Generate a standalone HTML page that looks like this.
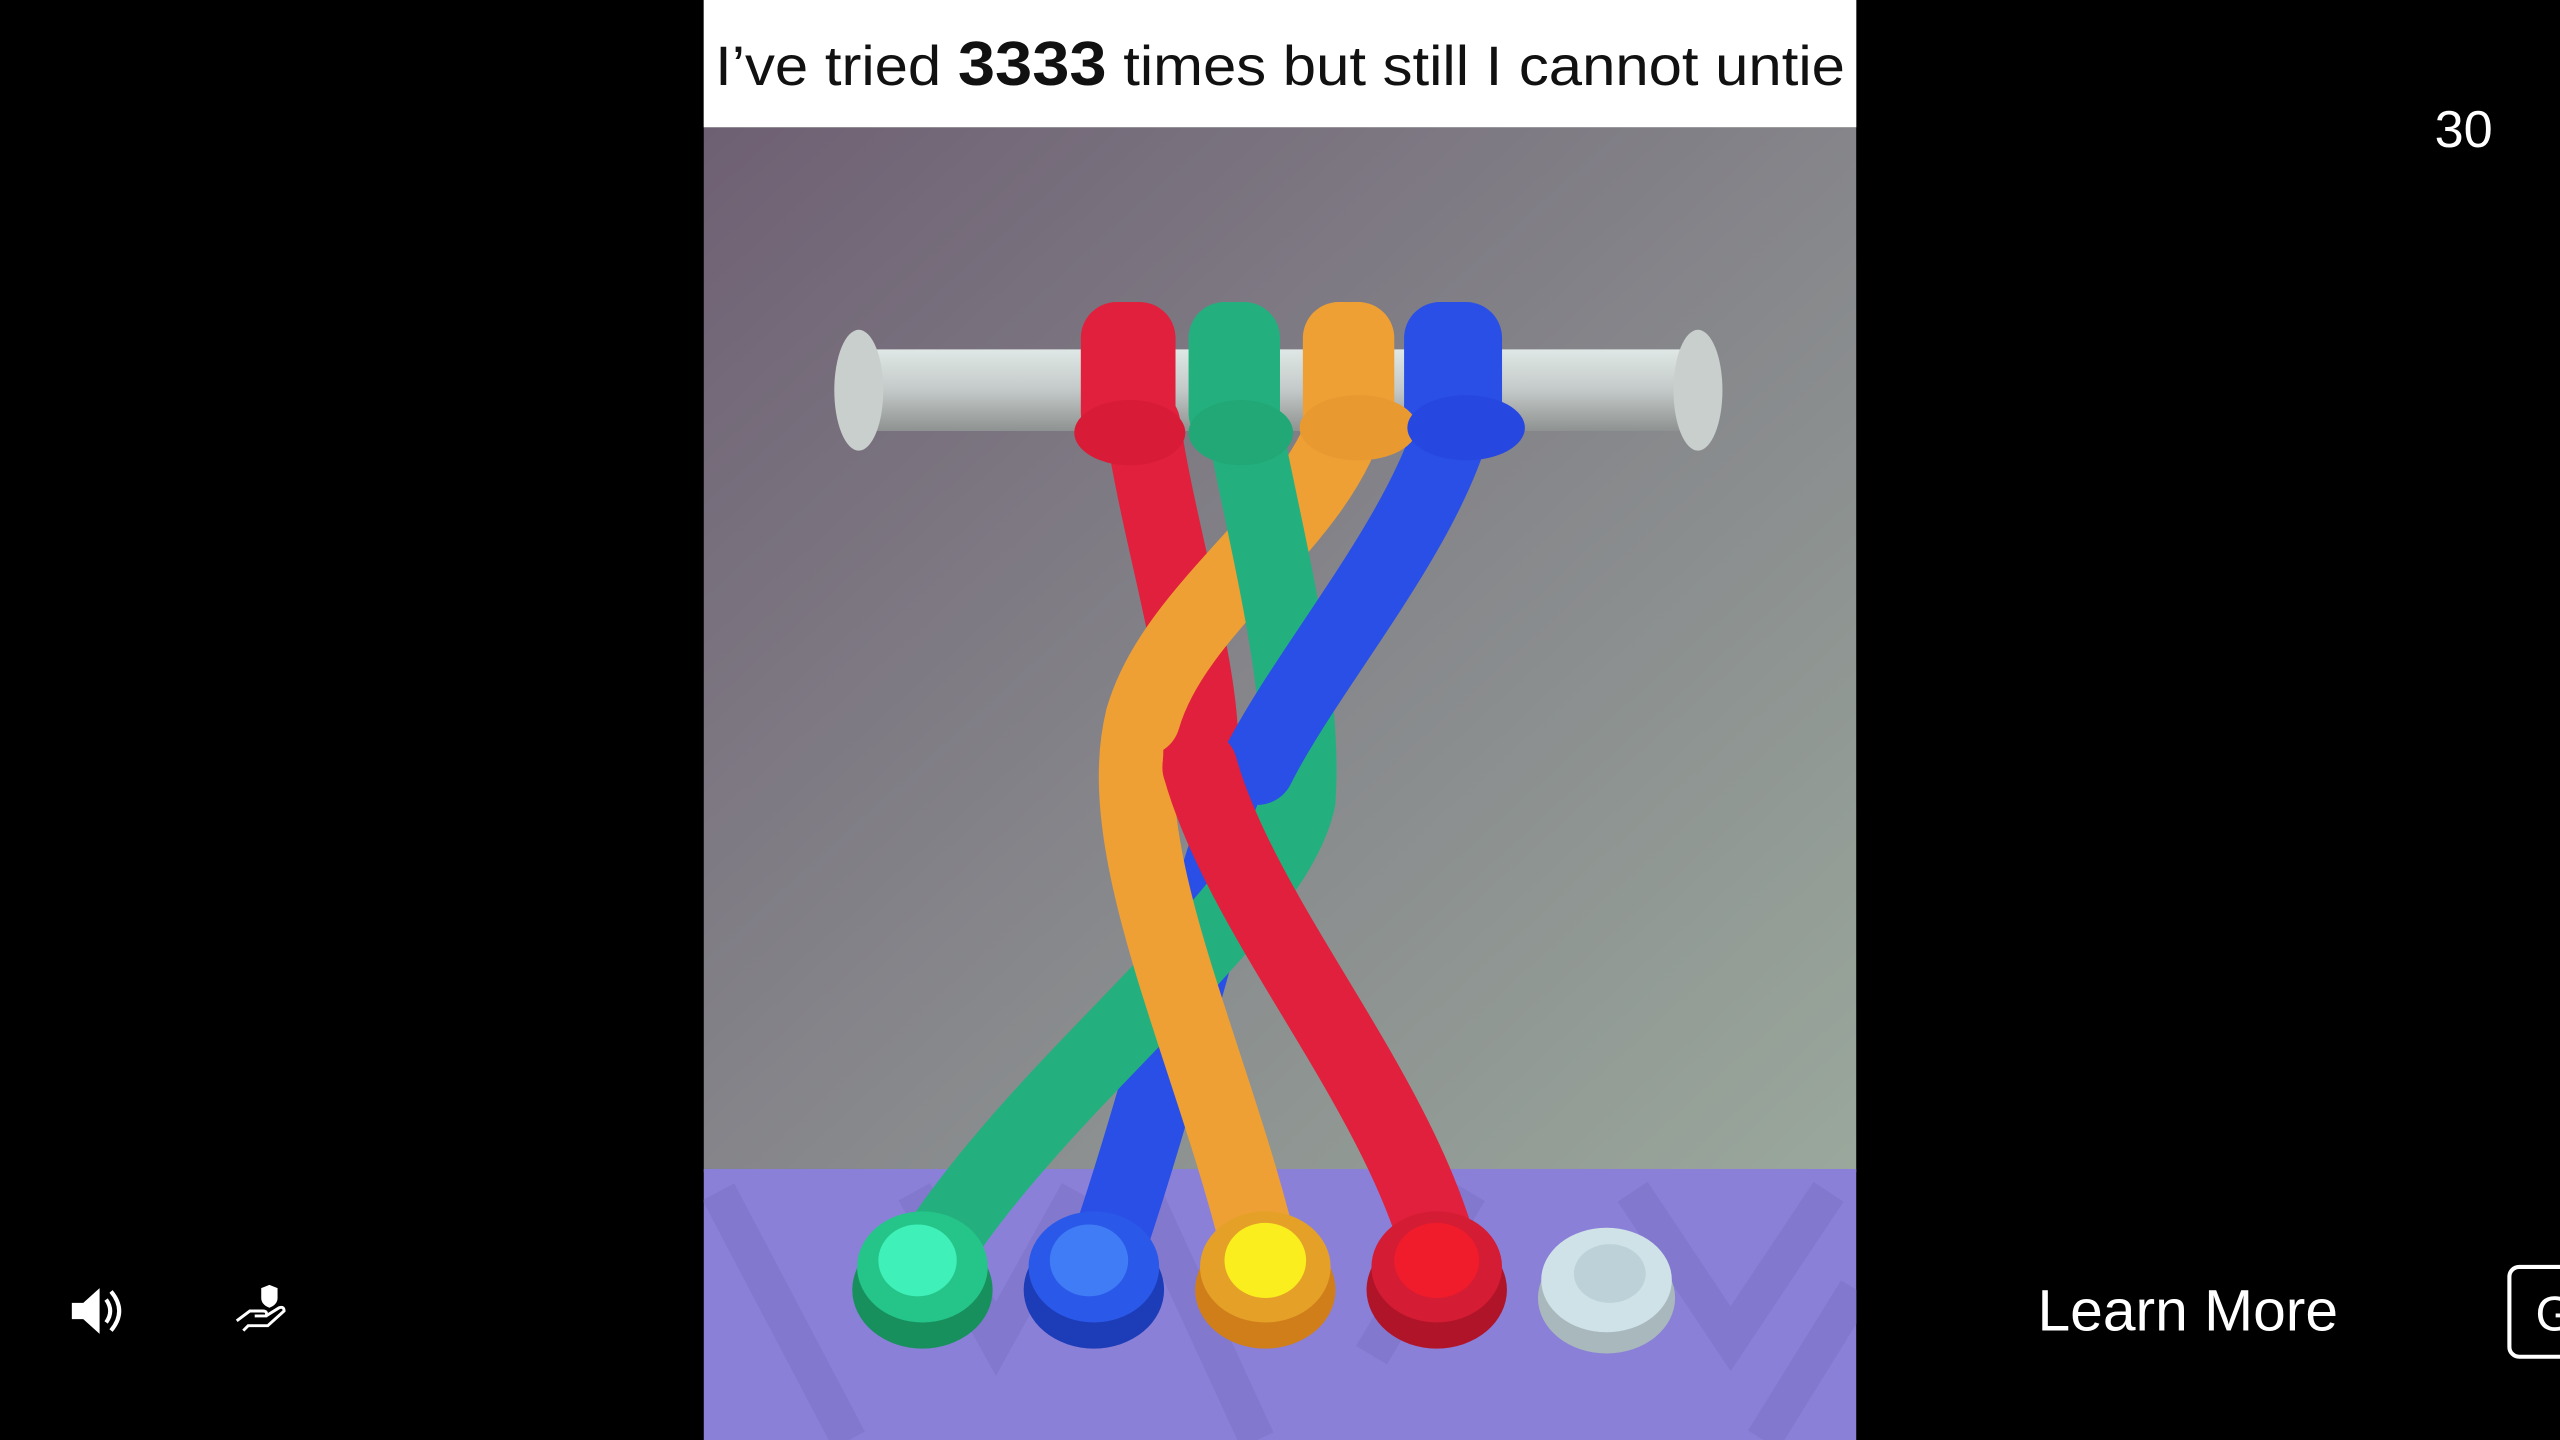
<!DOCTYPE html>
<html><head><meta charset="utf-8"><style>
html,body{margin:0;padding:0;background:#000;width:2560px;height:1440px;overflow:hidden}
svg{display:block}
</style></head><body>
<svg width="2560" height="1440" viewBox="0 0 1568 882" preserveAspectRatio="none" xmlns="http://www.w3.org/2000/svg">
<defs>
<linearGradient id="bg" x1="0" y1="0" x2="1" y2="1">
<stop offset="0" stop-color="#6e6073"/><stop offset="0.5" stop-color="#85858a"/><stop offset="1" stop-color="#9aa89c"/>
</linearGradient>
<linearGradient id="bar" x1="0" y1="0" x2="0" y2="1">
<stop offset="0" stop-color="#dfe8e6"/><stop offset="0.5" stop-color="#c3c9c8"/><stop offset="1" stop-color="#8e9291"/>
</linearGradient>
<clipPath id="vid"><rect x="431" y="78" width="706" height="804"/></clipPath>
</defs>
<rect x="0" y="0" width="1568" height="882" fill="#000"/>
<g clip-path="url(#vid)">
<rect x="431" y="78" width="706" height="640" fill="url(#bg)"/>
<rect x="431" y="716" width="706" height="166" fill="#8a80d8"/>
<g stroke="#8076cc" stroke-width="22" fill="none" opacity="0.8">
<path d="M440 730 L520 882 M560 730 L610 820 L660 730 M700 730 L770 882 M840 830 L900 730 M1000 730 L1060 820 L1120 730 M1080 882 L1137 790"/>
</g>
<rect x="522" y="214" width="520" height="50" fill="url(#bar)"/>
<ellipse cx="526" cy="239" rx="15" ry="37" fill="#c9cfcd"/>
<ellipse cx="1040" cy="239" rx="15" ry="37" fill="#c9cfcd"/>
<g fill="none" stroke-linecap="round" stroke-width="46">
<path d="M770 470 C740 540 720 640 680 760" stroke="#2a4fe6"/>
<path d="M795 490 C780 560 640 660 570 770" stroke="#23b07e"/>
<path d="M700 440 C680 520 740 640 770 760" stroke="#eea034"/>
<path d="M700 260 C710 330 740 420 735 470" stroke="#e0203c"/>
<path d="M827 250 C810 320 720 370 700 440" stroke="#eea034"/>
<path d="M760 250 C775 330 800 420 795 490" stroke="#23b07e"/>
<path d="M890 260 C870 330 800 410 770 470" stroke="#2a4fe6"/>
<path d="M735 470 C760 560 850 660 880 760" stroke="#e0203c"/>
</g>
<rect x="662" y="185" width="58" height="90" rx="22" fill="#e0203c"/>
<rect x="728" y="185" width="56" height="90" rx="22" fill="#23b07e"/>
<rect x="798" y="185" width="56" height="90" rx="22" fill="#eea034"/>
<rect x="860" y="185" width="60" height="90" rx="22" fill="#2a4fe6"/>
<ellipse cx="692" cy="265" rx="34" ry="20" fill="#d81c38"/>
<ellipse cx="760" cy="265" rx="32" ry="20" fill="#22a877"/>
<ellipse cx="832" cy="262" rx="36" ry="20" fill="#e89a30"/>
<ellipse cx="898" cy="262" rx="36" ry="20" fill="#2748e0"/>
<ellipse cx="565" cy="790" rx="43" ry="36" fill="#18905e"/><ellipse cx="565" cy="776" rx="40" ry="34" fill="#25c489"/><ellipse cx="562" cy="772" rx="24" ry="22" fill="#3ff0b8"/>
<ellipse cx="670" cy="790" rx="43" ry="36" fill="#1c3cb8"/><ellipse cx="670" cy="776" rx="40" ry="34" fill="#2a58e8"/><ellipse cx="667" cy="772" rx="24" ry="22" fill="#3f7cf6"/>
<ellipse cx="775" cy="790" rx="43" ry="36" fill="#d07e1a"/><ellipse cx="775" cy="776" rx="40" ry="34" fill="#e5a028"/><ellipse cx="775" cy="772" rx="25" ry="23" fill="#fbee1e"/>
<ellipse cx="880" cy="790" rx="43" ry="36" fill="#b01428"/><ellipse cx="880" cy="776" rx="40" ry="34" fill="#d41c34"/><ellipse cx="880" cy="772" rx="26" ry="23" fill="#f01c2c"/>
<ellipse cx="984" cy="795" rx="42" ry="34" fill="#a9b8bc"/><ellipse cx="984" cy="784" rx="40" ry="32" fill="#cfe2e8"/><ellipse cx="986" cy="780" rx="22" ry="18" fill="#bcd2d8"/>
</g>
<rect x="431" y="0" width="706" height="78" fill="#fff"/>
<text x="784" y="52" text-anchor="middle" font-family="Liberation Sans Narrow, Liberation Sans, sans-serif" font-size="34" fill="#111" textLength="692" lengthAdjust="spacingAndGlyphs">I’ve tried <tspan font-weight="bold" font-size="38">3333</tspan> times but still I cannot untie</text>
<text x="1509" y="90" text-anchor="middle" font-family="Liberation Sans, sans-serif" font-size="32" fill="#fff">30</text>
<text x="1340" y="815" text-anchor="middle" font-family="Liberation Sans, sans-serif" font-size="36" fill="#fff">Learn More</text>
<rect x="1537" y="776" width="60" height="55" rx="6" fill="none" stroke="#fff" stroke-width="2.5"/>
<text x="1553" y="815" font-family="Liberation Sans, sans-serif" font-size="30" fill="#fff">G</text>
<path d="M44 798 h7 l10 -9 v28 l-10 -9 h-7 z" fill="#fff"/>
<path d="M65 796 q5 7 0 14 M68 791 q10 12 0 24" stroke="#fff" stroke-width="2.5" fill="none"/>
<path d="M160 789 l5 -2 l5 2 v6 q0 4 -5 6 q-5 -2 -5 -6 z" fill="#fff"/>
<path d="M145 809 l8 -6 h8 q3 0 2 3 h-7 M163 806 l8 -5 q3 -1 3 2 l-10 9 h-12 l-3 3" stroke="#fff" stroke-width="1.8" fill="none"/>
</svg>
</body></html>
